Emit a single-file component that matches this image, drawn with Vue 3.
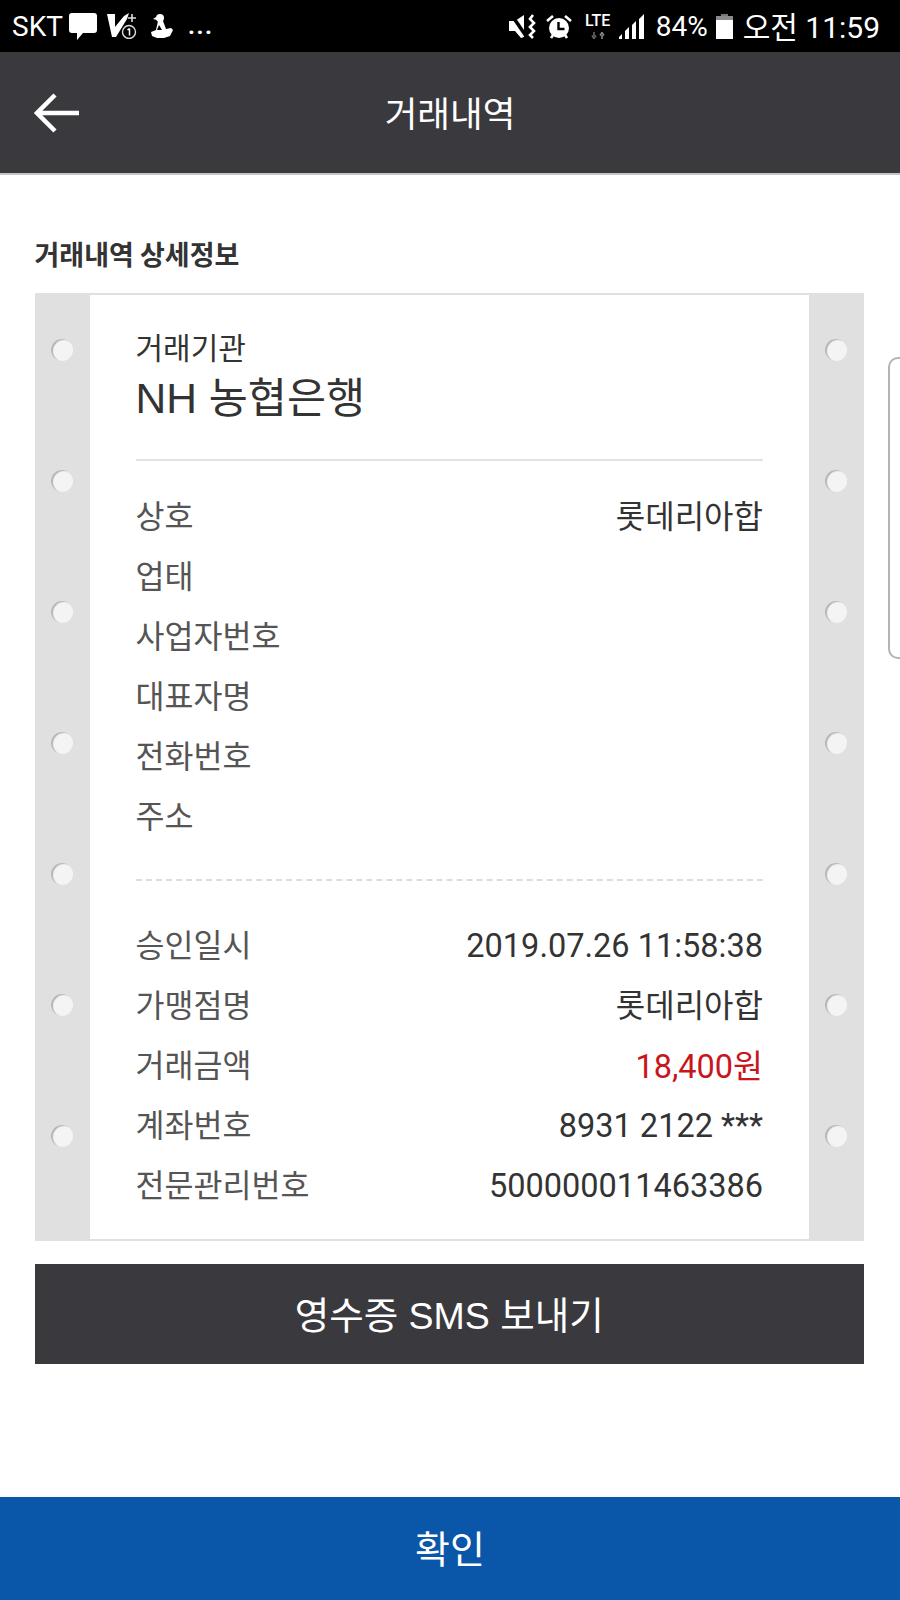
<script setup>
const holes = [0, 1, 2, 3, 4, 5, 6]
const company = [
  { label: '상호', value: '롯데리아합', cjk: true },
  { label: '업태', value: '' },
  { label: '사업자번호', value: '' },
  { label: '대표자명', value: '' },
  { label: '전화번호', value: '' },
  { label: '주소', value: '' },
]
const deal = [
  { label: '승인일시', value: '2019.07.26 11:58:38', num: true },
  { label: '가맹점명', value: '롯데리아합', cjk: true },
  { label: '거래금액', value: '18,400원', red: true },
  { label: '계좌번호', value: '8931 2122 ***', num: true },
  { label: '전문관리번호', value: '500000011463386', num: true },
]
</script>

<template>
  <div class="page">
    <div class="status">
      <div class="status-left">
        <span class="carrier">SKT</span>
        <svg class="ic ic-m" width="28" height="27" viewBox="0 0 28 27"><path d="M3 0h22q3 0 3 3v14q0 3-3 3H14l-6 7v-7H3q-3 0-3-3V3q0-3 3-3z" fill="#fff"/></svg>
        <svg class="ic ic-v" width="30" height="26" viewBox="0 0 30 26">
          <path d="M0 1h8v13L17 3l5-3-2 6L9 24H5z" fill="#fff"/>
          <path d="M25 1v8M21 5h8" stroke="#ddd" stroke-width="1.6"/>
          <circle cx="22" cy="19" r="6.5" fill="#000" stroke="#ddd" stroke-width="1.4"/>
          <path d="M22.5 15.5v7M20.5 17l2-1.5" fill="none" stroke="#fff" stroke-width="1.5"/>
        </svg>
        <svg class="ic ic-p" width="22" height="26" viewBox="0 0 22 26">
          <circle cx="9" cy="5" r="4" fill="#fff"/>
          <path d="M5 4L2 6l4 1z" fill="#fff"/>
          <path d="M7 8h5l3 8 5-1 2 2-3 6-6 2H6l-5-2-1-4 5-2z" fill="#fff"/>
          <path d="M8 12l-2 5h5z" fill="#000"/>
        </svg>
        <span class="dots">...</span>
      </div>
      <div class="status-right">
        <svg class="ic" width="27" height="25" viewBox="0 0 27 25">
          <path d="M0 7h6l9-6v22l-3 1-6-7H0z" fill="#fff"/>
          <path d="M2 0l17 25" stroke="#000" stroke-width="3.5"/>
          <path d="M24 1l-3 4 4 4-4 4 4 4-4 4 3 3" fill="none" stroke="#fff" stroke-width="2.6"/>
        </svg>
        <svg class="ic ic-a" width="26" height="25" viewBox="0 0 26 25">
          <circle cx="13" cy="14" r="10" fill="#fff"/>
          <path d="M12.5 8v7h6" fill="none" stroke="#000" stroke-width="2.4"/>
          <path d="M1 7l6-5M25 7l-6-5M5 24l2-3M21 24l-2-3" stroke="#fff" stroke-width="2.6"/>
        </svg>
        <div class="lte">
          <span>LTE</span>
          <svg width="14" height="7" viewBox="0 0 14 7"><path d="M3 0v4M1 3.5l2 3 2-3" fill="none" stroke="#666" stroke-width="1.6"/><path d="M11 7V3M9 3.5l2-3 2 3" fill="none" stroke="#888" stroke-width="1.6"/></svg>
        </div>
        <svg class="ic ic-s" width="26" height="25" viewBox="0 0 26 25">
          <path d="M0 25v-2l3-3v5zM6 25v-8l4-4v12zM13 25V11l4-4v18zM20 25V5l5-5v25z" fill="#fff"/>
        </svg>
        <span class="pct">84%</span>
        <svg class="ic ic-b" width="17" height="25" viewBox="0 0 17 25">
          <rect x="5" y="0" width="7" height="2" fill="#777"/>
          <rect x="0" y="2" width="17" height="4" fill="#8a8a8a"/>
          <rect x="0" y="6" width="17" height="19" fill="#fff"/>
        </svg>
        <span class="clock">오전 11:59</span>
      </div>
    </div>

    <header class="bar">
      <svg class="back" width="46" height="40" viewBox="0 0 46 40">
        <path d="M45 20H4M21 2L3 20l18 18" fill="none" stroke="#fff" stroke-width="4.5"/>
      </svg>
      <h1>거래내역</h1>
    </header>

    <main class="content">
      <h2>거래내역 상세정보</h2>
      <div class="ticket">
        <div class="strip">
          <i v-for="h in holes" :key="h" class="hole"></i>
        </div>
        <div class="paper">
          <div class="org">
            <p class="org-label">거래기관</p>
            <p class="org-name">NH 농협은행</p>
          </div>
          <div class="rows rows-solid">
            <div v-for="r in company" :key="r.label" class="row">
              <span class="lbl">{{ r.label }}</span>
              <span class="val" :class="{ cjk: r.cjk }">{{ r.value }}</span>
            </div>
          </div>
          <div class="rows rows-dash">
            <div v-for="r in deal" :key="r.label" class="row">
              <span class="lbl">{{ r.label }}</span>
              <span class="val" :class="{ red: r.red, cjk: r.cjk, num: r.num }">{{ r.value }}</span>
            </div>
          </div>
        </div>
        <div class="strip">
          <i v-for="h in holes" :key="h" class="hole"></i>
        </div>
      </div>
      <button class="sms">영수증 SMS 보내기</button>
    </main>

    <button class="ok">확인</button>
    <div class="edge"></div>
  </div>
</template>

<style scoped>
.page {
  position: relative;
  width: 900px;
  height: 1600px;
  display: flex;
  flex-direction: column;
  background: #fff;
  overflow: hidden;
  font-family: "Roboto", "Noto Sans CJK KR", sans-serif;
}
.status {
  height: 52px;
  background: #000;
  color: #fff;
  display: flex;
  justify-content: space-between;
  align-items: center;
  padding: 0 20px 0 12px;
  box-sizing: border-box;
}
.status-left, .status-right {
  display: flex;
  align-items: center;
}
.carrier {
  font: 28px "Roboto", sans-serif;
  width: 51px;
}
.ic { display: block; flex: none; }
.ic-m { margin-left: 6px; }
.ic-v { margin-left: 10px; }
.ic-p { margin-left: 14px; }
.dots {
  font: bold 24px "Roboto", sans-serif;
  letter-spacing: 1.5px;
  margin-left: 15px;
}
.ic-a { margin-left: 10px; }
.lte {
  margin-left: 12px;
  display: flex;
  flex-direction: column;
  align-items: center;
  font: 500 16px/14px "Roboto", sans-serif;
  width: 28px;
}
.lte svg { display: block; margin-top: 4px; }
.ic-s { margin-left: 7px; }
.pct {
  font: 28px "Roboto", sans-serif;
  margin-left: 11px;
}
.ic-b { margin-left: 8px; }
.clock {
  font: 30px "Roboto", "Noto Sans CJK KR", sans-serif;
  margin-left: 10px;
  padding-bottom: 3px;
}
.bar {
  height: 123px;
  background: #3a3a3e;
  border-bottom: 2px solid #c4c4c4;
  box-sizing: border-box;
  display: flex;
  align-items: center;
  justify-content: center;
  position: relative;
}
.back {
  position: absolute;
  left: 34px;
  top: 41px;
}
.bar h1 {
  margin: 0 0 2px;
  font: 400 35.5px "Noto Sans CJK KR", sans-serif;
  color: #fff;
}
.content {
  flex: 1;
  padding: 61px 36px 0 34.5px;
}
.content h2 {
  margin: 0 0 21px;
  font: 700 27px/36px "Noto Sans CJK KR", sans-serif;
  color: #333;
}
.ticket {
  display: flex;
  height: 948px;
  background: #e0e0e0;
}
.strip {
  width: 55.5px;
  flex: none;
  padding-top: 46px;
  box-sizing: border-box;
  display: flex;
  flex-direction: column;
  align-items: center;
  gap: 109px;
}
.hole {
  display: block;
  width: 22px;
  height: 22px;
  border-radius: 50%;
  background: #f4f4f4;
  box-shadow: inset 2px 1px 1px #b5b5b5;
}
.paper {
  flex: 1;
  background: #fff;
  margin: 2px 0;
  padding: 0 45.5px 0 45.5px;
  min-width: 0;
}
.org {
  padding-top: 30px;
  height: 134px;
  border-bottom: 2px solid #e2e2e2;
}
.org p { margin: 0; }
.org-label {
  font: 400 30px/42px "Noto Sans CJK KR", sans-serif;
  color: #333;
}
.org-name {
  font: 400 42.5px/64px "Liberation Sans", "Noto Sans CJK KR", sans-serif;
  color: #333;
}
.rows-solid {
  padding: 23px 0 35px;
}
.rows-dash {
  border-top: 2px dashed #dcdcdc;
  padding-top: 32px;
}
.row {
  display: flex;
  justify-content: space-between;
  align-items: center;
  height: 60px;
}
.lbl {
  font: 400 31.5px "Noto Sans CJK KR", sans-serif;
  color: #555;
}
.val {
  font: 400 32.5px "Roboto", "Noto Sans CJK KR", sans-serif;
  color: #333;
}
.val.cjk { font-size: 32px; }
.val.num { padding-top: 5px; }
.red { color: #c8161d; }
.sms {
  display: block;
  width: 100%;
  height: 100px;
  margin-top: 23px;
  border: 0;
  padding: 0 0 4px;
  background: #3a3a3e;
  color: #fff;
  font: 400 37.5px "Liberation Sans", "Noto Sans CJK KR", sans-serif;
}
.ok {
  display: block;
  width: 100%;
  height: 103px;
  border: 0;
  padding: 0 0 4px;
  background: #0a56a8;
  color: #fff;
  font: 400 38px "Noto Sans CJK KR", sans-serif;
}
.edge {
  position: absolute;
  right: -12px;
  top: 357px;
  width: 20px;
  height: 298px;
  border: 2px solid #b4b4b4;
  border-radius: 10px;
  background: #fff;
}
</style>
